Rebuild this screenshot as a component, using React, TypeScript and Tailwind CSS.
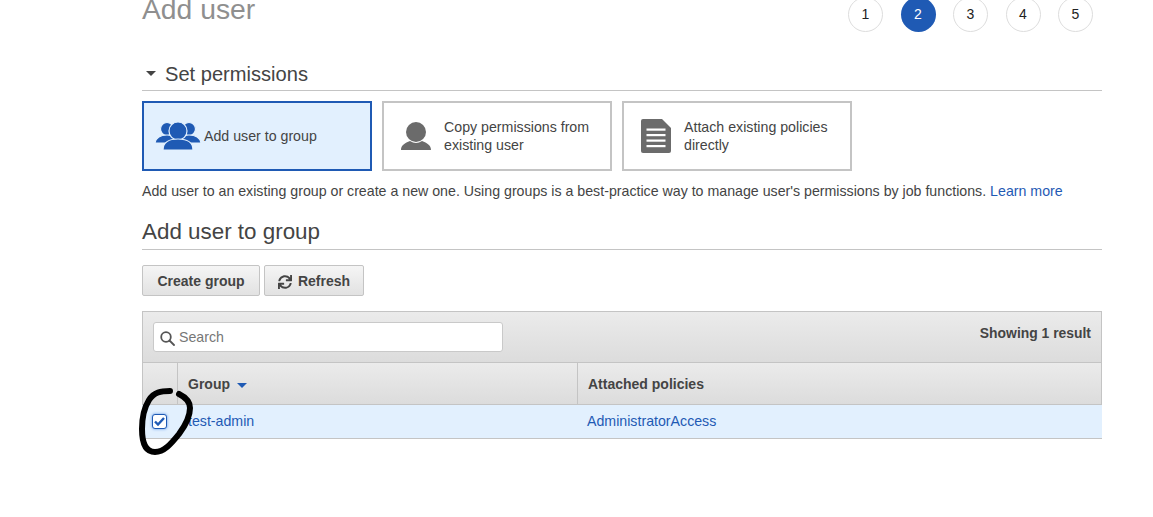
import React from 'react';
import { FaSync } from 'react-icons/fa';

const steps = [1, 2, 3, 4, 5];

const GroupIcon = () => (
  <svg width="46" height="30" viewBox="0 0 46 30" className="shrink-0">
    <g fill="#1f5ab4" stroke="#e2f0fe" strokeWidth="1.2">
      <circle cx="12" cy="8" r="6.5" />
      <circle cx="34" cy="8" r="6.5" />
      <path d="M0 22c1-5 5-8 12-8s11 3 12 8z" />
      <path d="M22 22c1-5 5-8 12-8s11 3 12 8z" />
      <circle cx="23" cy="10" r="9" />
      <path d="M8 29c0-8 6-11 15-11s15 3 15 11z" />
    </g>
  </svg>
);

const UserIcon = () => (
  <svg width="30" height="28" viewBox="0 0 30 28" className="shrink-0">
    <g fill="#6b6b6b">
      <circle cx="15" cy="10" r="10" />
      <path d="M0 28c0-5 4-7 9-9 4 2.500 8 2.500 12 0 5 2 9 4 9 9z" />
    </g>
  </svg>
);

const DocIcon = () => (
  <svg width="30" height="34" viewBox="0 0 30 34" className="shrink-0">
    <path d="M2 0h19l9 9v23a2 2 0 0 1-2 2H2a2 2 0 0 1-2-2V2a2 2 0 0 1 2-2z" fill="#6b6b6b" />
    <g fill="#fff">
      <rect x="5.500" y="9.500" width="19" height="2.200" />
      <rect x="5.500" y="15" width="19" height="2.200" />
      <rect x="5.500" y="20.500" width="19" height="2.200" />
      <rect x="5.500" y="26" width="19" height="2.200" />
    </g>
  </svg>
);

export default function App() {
  return (
    <div className="relative h-[517px] w-[1153px] overflow-hidden bg-white pl-[142px] font-['Liberation_Sans',Arial,sans-serif] text-[14.200px] text-[#444]">
      <div className="w-[960px]">
        {/* titre + etapes */}
        <div className="-mt-[3px] flex h-[35px] items-start justify-between pr-[9px]">
          <h1 className="-mt-[4px] text-[28.300px] leading-[32px] text-[#8f8f8f]">Add user</h1>
          <div className="flex gap-[17.500px]">
            {steps.map(n => (
              <div
                key={n}
                className={
                  n === 2
                    ? 'flex h-[35px] w-[35px] items-center justify-center rounded-full bg-[#1f5ab4] text-[14px] text-white'
                    : 'flex h-[35px] w-[35px] items-center justify-center rounded-full border border-[#ddd] text-[14px] text-[#222]'
                }
              >
                {n}
              </div>
            ))}
          </div>
        </div>

        <div className="mt-[30px] flex h-[29px] items-center border-b border-[#c4c4c4] pb-[5px]">
          <span className="ml-[4px] h-0 w-0 border-x-[5px] border-t-[5px] border-x-transparent border-t-[#444]" />
          <h2 className="ml-[9px] text-[20.100px] leading-[24px] text-[#444]">Set permissions</h2>
        </div>

        <div className="mt-[10px] flex gap-[10px]">
          <div className="flex h-[70px] w-[230px] items-center border-2 border-[#1f5ab4] bg-[#e2f0fe] pl-[11px]">
            <GroupIcon />
            <span className="ml-[3px] pt-[2px]">Add user to group</span>
          </div>
          <div className="flex h-[70px] w-[230px] items-center border-2 border-[#c4c4c4] pl-[17px]">
            <UserIcon />
            <span className="ml-[13px] leading-[18px]">Copy permissions from<br />existing user</span>
          </div>
          <div className="flex h-[70px] w-[230px] items-center border-2 border-[#c4c4c4] pl-[17px]">
            <DocIcon />
            <span className="ml-[13px] leading-[18px]">Attach existing policies<br />directly</span>
          </div>
        </div>

        <p className="mt-[11px] whitespace-nowrap leading-[18px]">
          Add user to an existing group or create a new one. Using groups is a best-practice way to manage user's permissions by job functions.{' '}
          <a className="text-[#1f5ab4]">Learn more</a>
        </p>

        <h2 className="mt-[18px] h-[32px] border-b border-[#c4c4c4] text-[22.400px] leading-[28px] text-[#444]">Add user to group</h2>

        <div className="mt-[15px] flex gap-[4px]">
          <button className="h-[31px] w-[118px] rounded-[2px] border border-[#c4c4c4] bg-gradient-to-b from-[#f5f5f5] to-[#e2e2e2] pt-[2px] text-[14px] font-bold text-[#444]">
            Create group
          </button>
          <button className="flex h-[31px] w-[100px] items-center justify-center gap-[6px] rounded-[2px] border border-[#c4c4c4] bg-gradient-to-b from-[#f5f5f5] to-[#e2e2e2] pt-[2px] text-[14px] font-bold text-[#444]">
            <FaSync size={14} />
            Refresh
          </button>
        </div>

        {/* tableau */}
        <div className="mt-[15px]">
          <div className="flex h-[52px] items-start justify-between border border-[#c4c4c4] bg-gradient-to-b from-[#ebebeb] to-[#dcdcdc] pl-[10px] pr-[10px] pt-[10px]">
            <div className="flex h-[30px] w-[350px] items-center rounded-[3px] border border-[#c9c9c9] bg-white pl-[6px] pt-[2px] text-[#777]">
              <svg width="15" height="15" viewBox="0 0 15 15" fill="none" stroke="#555" strokeWidth="1.800">
                <circle cx="6" cy="6" r="4.800" />
                <path d="M9.500 9.500L14 14" strokeLinecap="round" />
              </svg>
              <span className="ml-[4px]">Search</span>
            </div>
            <span className="pt-[1px] text-[13.900px] font-bold leading-[20px] text-[#444]">Showing 1 result</span>
          </div>
          <div className="flex h-[42px] border-x border-b border-[#c4c4c4] bg-gradient-to-b from-[#ebebeb] to-[#dcdcdc]">
            <div className="w-[35px] border-r border-[#c4c4c4]" />
            <div className="flex w-[400px] items-center gap-[7px] border-r border-[#c4c4c4] pl-[10px] pt-[2px] text-[14px] font-bold">
              Group
              <span className="mt-[1px] h-0 w-0 border-x-[5px] border-t-[5px] border-x-transparent border-t-[#1f5ab4]" />
            </div>
            <div className="flex flex-1 items-center pl-[10px] pt-[2px] text-[14px] font-bold">Attached policies</div>
          </div>
          <div className="flex h-[34px] items-center border-b border-[#c4c4c4] bg-[#e2f0fe] text-[#1f5ab4]">
            <div className="flex w-[36px] justify-center">
              <span className="mr-[1px] flex h-[15px] w-[15px] items-center justify-center rounded-[3px] border border-[#1f5ab4] bg-white shadow-[0_0_3px_#5b93e6]">
                <svg width="11" height="9" viewBox="0 0 11 9" fill="none" stroke="#1f5ab4" strokeWidth="2.400">
                  <path d="M1 4.500L4 7.500L10 1" />
                </svg>
              </span>
            </div>
            <div className="w-[399px] pl-[10px]">test-admin</div>
            <div className="pl-[10px]">AdministratorAccess</div>
          </div>
        </div>
      </div>

      {/* trait a main sur la capture */}
      <svg width="70" height="80" viewBox="0 0 70 80" className="absolute left-[130px] top-[382px]" fill="none" stroke="#000" strokeWidth="6" strokeLinecap="round" strokeLinejoin="round">
        <path d="M40 9C31 9 24 10 19 18C14 26 12 37 12 47C12 60 15 70 25 70C34 70 41 62 49 52C55 44 60 34 60 26C60 19 55 15 49 12" />
      </svg>
    </div>
  );
}
